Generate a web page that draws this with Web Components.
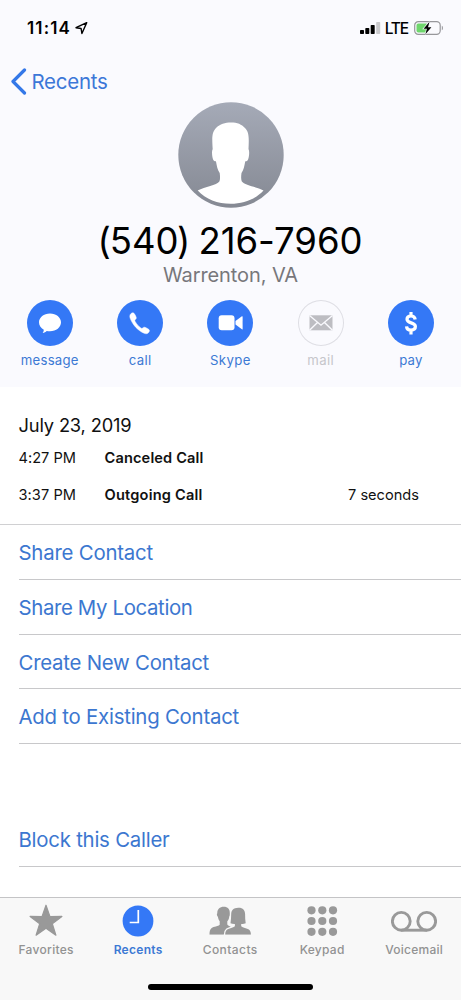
<!DOCTYPE html>
<html lang="en">
<head>
<meta charset="utf-8">
<title>Call details</title>
<style>
body{margin:0;background:#fff;font-family:Inter,"Liberation Sans",sans-serif}
</style>
</head>
<body>
<phone-screen></phone-screen>
<script>
const define = (name, html, setup) => {
  const template = document.createElement('template');
  template.innerHTML = html;
  customElements.define(name, class extends HTMLElement {
    constructor() {
      super();
      this.attachShadow({mode: 'open'}).appendChild(template.content.cloneNode(true));
    }
    connectedCallback() { if (setup) setup(this, this.shadowRoot); }
  });
};

const icons = {
  message: ['46 46', '<path fill="#fff" d="M23 13.400c6.200 0 11 3.900 11 8.900s-4.800 9-11 9c-1.200 0-2.300-.1-3.300-.4-1 1-2.300 1.800-4 2 .8-1 1.200-2 1.100-3.100C13.700 28.200 12 25.500 12 22.300c0-5 4.800-8.900 11-8.900z"/>'],
  call: ['46 46', '<path fill="#fff" stroke="#fff" stroke-width=".5" d="M13.900 13.700c1.100-1 2.500-1.200 3.300-.2.900 1.100 1.500 2.400 1.900 3.600.4 1.200.1 1.800-.8 2.500-.6.500-.6 1.100-.2 1.800 1.600 2.700 3.500 4.900 5.800 6.600.6.500 1.200.6 1.800 0 .9-.9 1.600-1 2.800-.5 1.300.5 2.400 1.200 3.400 2 .9.800.5 2-.3 3-1.100 1.300-2.700 1.500-4.400.8-6.100-2.600-11.300-8.200-13.800-14.500-.8-2-.8-3.900.5-5.100z"/>'],
  video: ['46 46', '<rect x="11.700" y="15.300" width="15.800" height="15" rx="3" fill="#fff"/><path fill="#fff" d="M28.500 21.100l6.400-4.800q.7-.4.700.4v12.200q0 .8-.7.400l-6.400-4.800z"/>'],
  mail: ['46 46', '<rect x="11.500" y="15.300" width="23" height="15" fill="#bdbdc2"/><path d="M11.500 15.500L23 25.200 34.500 15.500M11.500 30.300l8-7.800M34.500 30.300l-8-7.800" fill="none" stroke="#fafafe" stroke-width="1.400"/>'],
  pay: ['46 46', '<path d="M27.200 19.500c-.3-2.300-1.700-3.500-4.200-3.500-2.500 0-4 1.300-4 3.300 0 4.600 8.400 2.500 8.400 7.300 0 2.200-1.700 3.500-4.400 3.500-2.700 0-4.300-1.400-4.500-3.800M23 12v4M23 29.800V34.500" fill="none" stroke="#fff" stroke-width="3.200"/>'],
  star: ['46 34', '<path fill="#999" stroke="#999" stroke-width="1.200" stroke-linejoin="round" d="M23 2.200l3.900 11.300 12-.1-9.600 7.300 3.600 11.500L23 25.300l-9.900 6.900 3.600-11.500-9.600-7.300 12 .1z"/>'],
  clock: ['46 34', '<circle cx="23" cy="18" r="15.400" fill="#3478f6"/><path d="M23.300 7v12.500H14.700" fill="none" stroke="#fff" stroke-width="1.700"/>'],
  people: ['46 34', '<path fill="#999" d="M16.800 3.800c4 0 6.200 2.600 6 6.500.8.300.4 2.500-.5 3.400-.4 2.400-1 3.700-2 4.600v3.300c.8 1 2 1.600 3.200 2v8.100H2.500c0-3 .3-5.400 2.200-6.700 2-1.300 6.700-1.800 8-3.200v-3.500c-1-1.100-1.500-2.600-1.800-4.500-1-.9-1.400-3-.6-3.500-.2-3.900 2.500-6.500 6.500-6.500z"/><path fill="#999" stroke="#f8f8f8" stroke-width="2.800" paint-order="stroke" d="M31.200 4.700c4.700-.2 6.800 2.600 6.900 6.300 0 3.300.1 6.300.6 9.300-1.100.6-2.900.9-4.500.8v2.200c1.600 1.400 5.800 1.900 7.700 3.300 1.500 1.200 2 2.800 2 5.100H18.200c0-2.300.5-3.900 2-5.100 1.900-1.400 6.100-1.900 7.700-3.300v-2.200c-1.600.1-3.300-.2-4.400-.8.500-3 .6-6 .7-9.300.1-3.700 2.200-6.100 7-6.300z"/><path fill="#f8f8f8" d="M0 31.700h46v2.300H0z"/>'],
  keypad: ['46 34', '<g fill="#999">' + [12.500, 23.300, 34].map(x => [7.300, 18, 28.800].map(y => `<circle cx="${x}" cy="${y}" r="4.100"/>`).join('')).join('') + '</g>'],
  voicemail: ['46 34', '<g fill="none" stroke="#999" stroke-width="2.900"><circle cx="10.300" cy="18.300" r="8.900"/><circle cx="35.700" cy="18.300" r="8.900"/><path d="M10.300 27.200h25.400"/></g>']
};

/* Text whose tracking is adjusted so the line takes the given width. */
define('tracked-text', `
<style>:host{display:block;white-space:nowrap}span{display:inline-block;line-height:inherit}</style>
<span><slot></slot></span>`, (host, root) => {
  const span = root.querySelector('span');
  const target = +host.getAttribute('width');
  const gap = (target - span.getBoundingClientRect().width) / host.textContent.length;
  span.style.letterSpacing = gap.toFixed(3) + 'px';
  span.style.marginRight = (-gap).toFixed(3) + 'px';
});

define('line-icon', `
<style>:host{display:block}svg{display:block}</style><svg></svg>`, (host, root) => {
  if (!host.hasAttribute('name')) return;
  const [size, body] = icons[host.getAttribute('name')];
  const [w, h] = size.split(' ');
  const svg = root.querySelector('svg');
  svg.setAttribute('viewBox', `0 0 ${w} ${h}`);
  svg.setAttribute('width', w);
  svg.setAttribute('height', h);
  svg.innerHTML = body;
});

define('status-bar', `
<style>
:host{display:flex;justify-content:space-between;height:56px;padding:0 17px 0 27px;box-sizing:border-box;align-items:center}
div{display:flex;align-items:center}
.time{font-size:17px;font-weight:600;gap:5px}
.net{font-size:15.500px;font-weight:500}
svg{display:block}
tracked-text{line-height:24px}
.net tracked-text{padding-top:1px}
</style>
<div class="time"><tracked-text width="44">11:14</tracked-text>
<svg width="13" height="14" viewBox="0 0 13 14"><path d="M11.700 1.700L1 6.700l5.100.8.800 5z" fill="none" stroke="#000" stroke-width="1.400" stroke-linejoin="round"/></svg></div>
<div class="net">
<svg width="21" height="14" viewBox="0 0 21 14"><rect x="0" y="9" width="4" height="4" rx=".7"/><rect x="5.300" y="7" width="4" height="6" rx=".7"/><rect x="10.700" y="4" width="4" height="9" rx=".7"/><rect x="16.200" y="1" width="4" height="12" rx=".7" fill="#c9c9cc"/></svg>
<tracked-text width="23" style="margin:0 5px 0 4px">LTE</tracked-text>
<svg width="30" height="14" viewBox="0 0 30 14"><rect x=".7" y=".7" width="25.500" height="12.600" rx="3.600" fill="none" stroke="#97979b" stroke-width="1.200"/><path d="M27.800 4.800c1.500.5 1.500 4 0 4.500z" fill="#97979b"/><path d="M4.300 2.500h8.500v9H4.300a1.800 1.800 0 0 1-1.800-1.800V4.300a1.800 1.800 0 0 1 1.800-1.800z" fill="#6fd66d"/><path d="M15.500.8L9.600 7.700h3.300l-1.500 5.500 6-7H14z" stroke="#fafafe" stroke-width="1.300" paint-order="stroke"/></svg>
</div>`);

define('nav-back', `
<style>
:host{display:flex;align-items:center;height:50px;padding-left:10.500px;color:#3c77d8;font-size:20.500px;gap:5px}
tracked-text{line-height:30px;padding-top:2px}
</style>
<svg width="16" height="27" viewBox="0 0 16 27"><path d="M13.500 2L2 13.500 13.500 25" fill="none" stroke="#3478e8" stroke-width="3.200" stroke-linecap="round" stroke-linejoin="round"/></svg>
<tracked-text width="76">Recents</tracked-text>`);

define('contact-avatar', `
<style>:host{display:block;height:106px;width:106px}svg{display:block}</style>
<svg width="106" height="106" viewBox="0 0 106 106">
<defs><linearGradient id="g" x1="0" y1="0" x2="0" y2="1"><stop offset="0" stop-color="#a5aab7"/><stop offset="1" stop-color="#858993"/></linearGradient></defs>
<circle cx="53" cy="53" r="52.700" fill="url(#g)"/>
<path fill="#fff" d="M53 20.500c6.500 0 10.500 1.800 14 5.500 4.300 4.500 4 10 3.500 21.200 1.300 1.500.6 9.600-1 11.200-.8.800-1.800.6-2.300 1-.7 4-1.500 8.500-3.700 11.600-.4 3-.6 5.800.2 8.200 2.900 4.300 14.500 5.300 21.800 9.300C77.500 97.200 65.500 101.800 52.700 101.800S27.500 97.200 19.700 88.500c7.300-4 18.900-5 21.800-9.300.8-2.400.6-5.200.2-8.200-2.200-3.100-3-7.600-3.700-11.600-.5-.4-1.500-.2-2.300-1-1.600-1.600-2.300-9.700-1-11.200C34 36 33.700 30.500 38 26c4-4 9-5.500 15-5.500z"/>
</svg>`);

define('contact-action', `
<style>
:host{display:flex;flex-direction:column;align-items:center;color:#3c79d4;font-size:13.200px}
.disc{width:46px;height:46px;border-radius:50%;background:#3478f6}
:host([disabled]){color:#c6c6cb}
:host([disabled]) .disc{background:#fafafe;box-shadow:inset 0 0 0 1px #dedee4}
.label{line-height:20px;margin-top:4px}
</style>
<div class="disc"></div><div class="label"><slot></slot></div>`, (host, root) => {
  const icon = document.createElement('line-icon');
  icon.setAttribute('name', host.getAttribute('icon'));
  root.querySelector('.disc').replaceChildren(icon);
});

define('contact-header', `
<style>
:host{display:flex;flex-direction:column;height:387px;background:#fafafe}
.card{display:flex;flex-direction:column;align-items:center;margin-top:-4px}
.number{font-size:36.500px;line-height:50px;margin:8px 1px 0 0}
.open{margin-right:-1px}
.close{margin:0 -2px 0 -1.500px}
.place{font-size:20px;line-height:26px;color:#77777b;margin-top:-4px}
.actions{display:grid;grid-template-columns:repeat(5,90.300px);margin:12px 0 0 4.500px}
</style>
<status-bar></status-bar>
<nav-back></nav-back>
<div class="card">
<contact-avatar></contact-avatar>
<tracked-text class="number" width="265">&#x200B;<span class="open">(</span>540<span class="close">)</span> 216-7960</tracked-text>
<tracked-text class="place" width="135">Warrenton, VA</tracked-text>
</div>
<div class="actions">
<contact-action icon="message"><tracked-text width="58">message</tracked-text></contact-action>
<contact-action icon="call"><tracked-text width="23">call</tracked-text></contact-action>
<contact-action icon="video"><tracked-text width="41">Skype</tracked-text></contact-action>
<contact-action icon="mail" disabled><tracked-text width="27">mail</tracked-text></contact-action>
<contact-action icon="pay"><tracked-text width="23.500">pay</tracked-text></contact-action>
</div>`.replace('&#x200B;', ''));

define('call-row', `
<style>
:host{display:grid;grid-template-columns:86px 243.500px auto;font-size:14.600px;line-height:37px;color:#111}
::slotted([slot=kind]){font-weight:600}
</style>
<slot name="time"></slot><slot name="kind"></slot><slot name="length"></slot>`);

define('call-log', `
<style>
:host{display:block;height:138px;box-sizing:border-box;padding:24px 0 0 18.500px;border-bottom:1.500px solid #d0d0d2}
.date{font-size:18.300px;line-height:28px;margin-bottom:1px;color:#111}
</style>
<tracked-text class="date" width="113">July 23, 2019</tracked-text>
<call-row><tracked-text slot="time" width="57.500">4:27 PM</tracked-text><tracked-text slot="kind" width="99">Canceled Call</tracked-text></call-row>
<call-row><tracked-text slot="time" width="57.500">3:37 PM</tracked-text><tracked-text slot="kind" width="98">Outgoing Call</tracked-text><tracked-text slot="length" width="71">7 seconds</tracked-text></call-row>`);

define('option-row', `
<style>
:host{display:block;box-sizing:border-box;height:54.800px;margin-left:18.500px;border-bottom:1px solid #c8c8ca;font-size:20.400px;line-height:56px;color:#3c77d0}
</style><slot></slot>`);

define('tab-item', `
<style>
:host{display:flex;flex-direction:column;align-items:center;color:#929292;font-size:12px;font-weight:500}
:host([active]){color:#3c79d4;font-weight:600}
.label{line-height:18px;margin-top:4px}
</style>
<div class="icon"></div><div class="label"><slot></slot></div>`, (host, root) => {
  const icon = document.createElement('line-icon');
  icon.setAttribute('name', host.getAttribute('icon'));
  root.querySelector('.icon').replaceChildren(icon);
});

define('tab-bar', `
<style>
:host{display:flex;flex-direction:column;justify-content:space-between;align-items:center;box-sizing:border-box;height:103px;background:#f8f8f8;border-top:1px solid #c4c4c6;padding:5px 0 10px}
nav{display:grid;grid-template-columns:repeat(5,92px);width:461px}
.home{width:165px;height:6px;border-radius:3px;background:#000}
</style>
<nav>
<tab-item icon="star"><tracked-text width="55.500">Favorites</tracked-text></tab-item>
<tab-item icon="clock" active><tracked-text width="49">Recents</tracked-text></tab-item>
<tab-item icon="people"><tracked-text width="55">Contacts</tracked-text></tab-item>
<tab-item icon="keypad"><tracked-text width="45">Keypad</tracked-text></tab-item>
<tab-item icon="voicemail"><tracked-text width="58">Voicemail</tracked-text></tab-item>
</nav>
<div class="home"></div>`);

define('phone-screen', `
<style>
:host{display:flex;flex-direction:column;width:461px;height:1000px;overflow:hidden;background:#fff;color:#000}
main{flex:1}
.block{margin-top:68px}
</style>
<contact-header></contact-header>
<main>
<call-log></call-log>
<option-row><tracked-text width="134.500">Share Contact</tracked-text></option-row>
<option-row><tracked-text width="174">Share My Location</tracked-text></option-row>
<option-row><tracked-text width="190.500">Create New Contact</tracked-text></option-row>
<option-row><tracked-text width="220.500">Add to Existing Contact</tracked-text></option-row>
<option-row class="block"><tracked-text width="151">Block this Caller</tracked-text></option-row>
</main>
<tab-bar></tab-bar>`);
</script>
</body>
</html>
